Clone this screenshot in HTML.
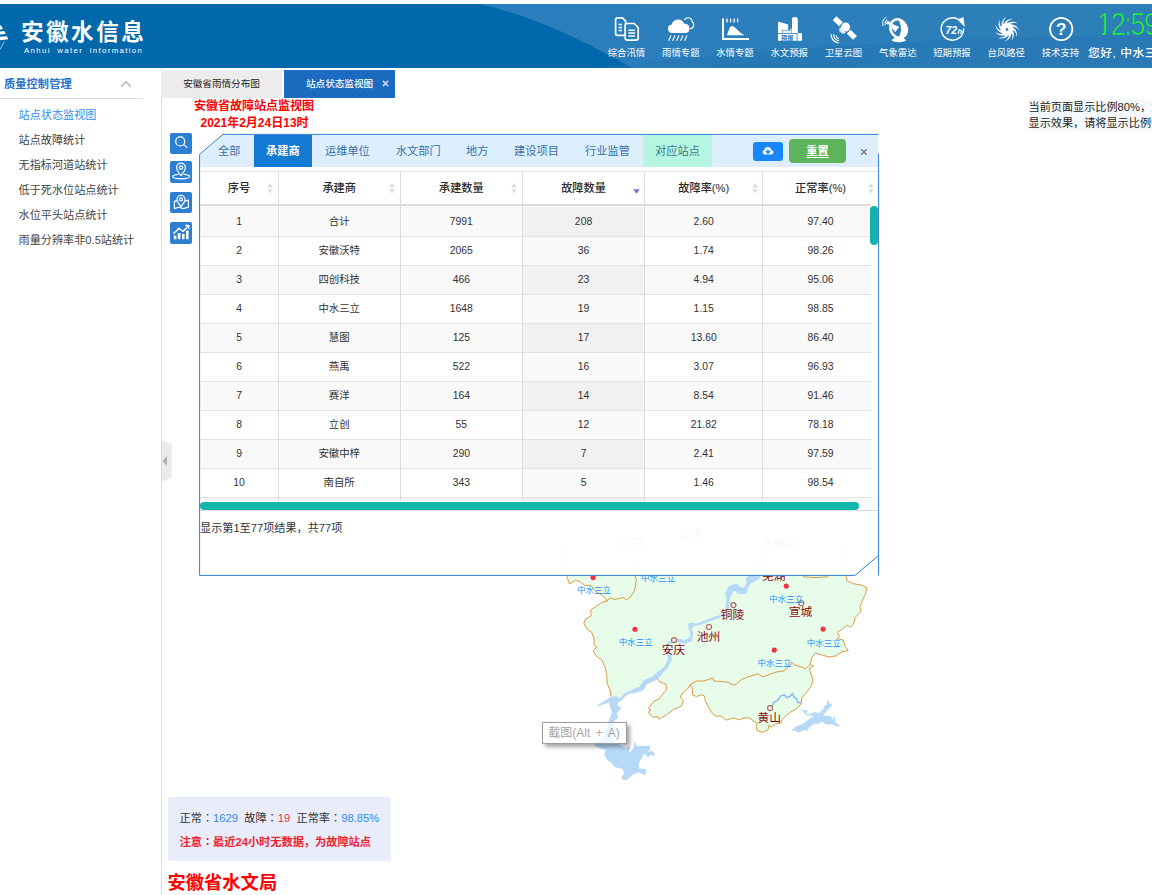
<!DOCTYPE html>
<html lang="zh-CN">
<head>
<meta charset="utf-8">
<title>安徽水信息</title>
<style>
*{box-sizing:border-box;margin:0;padding:0}
html,body{width:1152px;height:895px;overflow:hidden;background:#fff}
body{position:relative;font-family:"Liberation Sans","Noto Sans CJK SC",sans-serif;color:#333;font-size:10.4px}
.abs{position:absolute}
.fw{font-family:"Noto Sans CJK TC","Noto Sans CJK SC",sans-serif}
/* header */
#hdr{left:0;top:4px;width:1152px;height:63.5px;background:#0068ab;overflow:hidden}
#hdr svg.bg{position:absolute;left:0;top:0}
#logo-t{left:21px;top:14.4px;font-size:22.6px;font-weight:bold;color:#fff;letter-spacing:2.45px;line-height:30px;white-space:nowrap}
#logo-s{left:24px;top:42.2px;font-size:7.8px;color:#fff;letter-spacing:1.36px;line-height:10px;white-space:nowrap;word-spacing:3px}
.nav{position:absolute;top:43px;width:56px;text-align:center;color:#fff;font-size:9.4px;line-height:12px;white-space:nowrap}
.nico{position:absolute;top:11px;width:30px;height:30px}
#clock{left:1097.4px;top:2.6px;font-size:30.6px;line-height:34px;color:#1cf23c;white-space:nowrap;-webkit-text-stroke:0.7px #2b7ab5;letter-spacing:-1.6px;transform:scaleX(0.885);transform-origin:0 0}
#hello{left:1088px;top:42px;font-size:11.8px;line-height:14px;color:#fff;white-space:nowrap;letter-spacing:0.5px;font-weight:500}
/* sidebar */
#side{left:0;top:68px;width:162px;height:827px;border-right:1px solid #dcdcdc;background:#fff}
#side .ttl{left:4px;top:9px;font-size:11.2px;font-weight:bold;color:#2a6fcb;line-height:14px;white-space:nowrap;letter-spacing:0.1px}
#side .ln{left:0;top:30px;width:143px;height:1px;background:#ddd}
#side .it{left:18.5px;font-size:11.15px;line-height:14px;color:#444;white-space:nowrap}
#handle{left:161.8px;top:440px;width:10px;height:42px;background:#ebebeb;clip-path:polygon(0 0,100% 10%,100% 90%,0 100%)}
/* tabs */
.tab{top:69.5px;height:28px;line-height:28px;font-size:9.6px;white-space:nowrap;text-align:center}
#tab1{left:161px;width:121px;background:#ececec;color:#222}
#tab2{left:284px;width:111px;background:#1b6cc0;color:#fff}
#rt1,#rt2{color:#f00;font-weight:bold;font-size:12px;line-height:14px;white-space:nowrap}
#note{left:1028.5px;top:98.6px;font-size:11.15px;line-height:16.2px;color:#222;white-space:nowrap;background:#f5f9fd;width:130px}
.tbtn{left:170px;width:22px;height:21px;background:#2d7fd1;border-radius:2px}
/* panel */
#panel{left:199px;top:133.5px;width:680px;height:442.5px}
</style>
</head>
<body>
<!--HEADER-->
<div id="hdr" class="abs">
<svg class="bg" width="1152" height="64" viewBox="0 0 1152 64">
<defs><linearGradient id="hg" x1="0" y1="0" x2="1" y2="0"><stop offset="0" stop-color="#2a7ebd"/><stop offset="1" stop-color="#2e7fb8"/></linearGradient></defs>
<path d="M480 0 C540 14 590 40 632 64 L1152 64 L1152 0 Z" fill="url(#hg)"/>
<path d="M600 64 C700 50 900 34 1152 30 L1152 64 Z" fill="#2474b2" opacity="0.55"/>
</svg>
<svg class="abs" style="left:0;top:-4px" width="14" height="68" viewBox="0 0 14 68"><path d="M0 25.4 L1.2 25.4 L3 29 L0 29.6 Z M0 31.6 L4.2 31 L5.8 34 L0 34.6 Z M0 36.8 L6.8 36.2 L8.4 39.2 L0 40.2 Z" fill="#fff"/><path d="M4.2 41.6 L0 49.4" stroke="#dfeaf5" stroke-width="0.7" fill="none"/></svg>
<div id="logo-t" class="abs">安徽水信息</div>
<div id="logo-s" class="abs">Anhui water information</div>
<!--NAV-S-->
<div class="nav" style="left:598.5px">综合汛情</div>
<div class="nav" style="left:652.8px">雨情专题</div>
<div class="nav" style="left:707.0px">水情专题</div>
<div class="nav" style="left:761.2px">水文预报</div>
<div class="nav" style="left:815.5px">卫星云图</div>
<div class="nav" style="left:869.8px">气象雷达</div>
<div class="nav" style="left:924.0px">短期预报</div>
<div class="nav" style="left:978.2px">台风路径</div>
<div class="nav" style="left:1032.5px">技术支持</div>
<svg class="abs" style="left:0;top:-4px" width="1152" height="68" viewBox="0 0 1152 68" fill="none" stroke="#fff" stroke-linecap="round" stroke-linejoin="round">
<path d="M617.5 17.9 H622.4 L625.6 21.1 V33.2 Q625.6 35.4 623.4 35.4 H617.5 Q615.6 35.4 615.6 33.2 V20 Q615.6 17.9 617.5 17.9 Z" stroke-width="1.7"/>
<path d="M618.6 24.4 H622 M618.6 27.5 H622 M618.6 30.6 H622" stroke-width="1.5" stroke-linecap="butt"/>
<path d="M627.3 23.5 H634.2 L638.2 27.5 V38 Q638.2 40.2 636 40.2 H627.3 Q625.2 40.2 625.2 38 V25.7 Q625.2 23.5 627.3 23.5 Z" stroke-width="1.7" fill="#2b7dbb"/>
<path d="M628.3 30.2 H635 M628.3 33.1 H635 M628.3 36 H635" stroke-width="1.5" stroke-linecap="butt"/>
<path d="M684.5 19.6 Q686 17.6 688.6 17.8 Q692 18.4 692.2 21.8 Q694.2 23 693.6 26 Q692.8 28.6 690 28.8" stroke-width="1.1"/>
<path d="M672.8 33 Q668 33 668 28.8 Q668 25 671.8 24.6 Q672.6 19.6 678 19.4 Q682.6 19.4 684.2 23.8 Q689.4 23.6 689.4 28.4 Q689.4 33 684.8 33 Z" fill="#fff" stroke="none"/>
<path d="M671.0 35.6 L668.6 40.8" stroke-width="1.1" stroke-linecap="butt"/>
<path d="M675.0 35.6 L672.6 40.8" stroke-width="1.1" stroke-linecap="butt"/>
<path d="M679.0 35.6 L676.6 40.8" stroke-width="1.1" stroke-linecap="butt"/>
<path d="M683.0 35.6 L680.6 40.8" stroke-width="1.1" stroke-linecap="butt"/>
<path d="M687.0 35.6 L684.6 40.8" stroke-width="1.1" stroke-linecap="butt"/>
<path d="M723 18.4 V39 H749" stroke-width="2" stroke-linecap="butt" stroke-linejoin="miter"/>
<path d="M727 18.6 V22.4" stroke-width="1.3" stroke-linecap="butt"/>
<path d="M730.6 18.6 V22.4" stroke-width="1.3" stroke-linecap="butt"/>
<path d="M734.2 18.6 V22.4" stroke-width="1.3" stroke-linecap="butt"/>
<path d="M737.6 18.6 V22.4" stroke-width="1.3" stroke-linecap="butt"/>
<path d="M727 35.2 Q729.6 26 731.8 26 Q734 26 738 30.6 Q741 34 744.6 35.2 Z" fill="#fff" stroke="none"/>
<path d="M778 21.6 L788.2 24.6 V30 H782 V33 H778 Z" fill="#fff" stroke="none"/>
<path d="M792 33 V19 Q792 17 794 17 H795.8 Q797.8 17 797.8 19 V33 Z" fill="#fff" stroke="none"/>
<path d="M782.6 30.4 H790.4 V28.6 H791.6 V33 H782.6 Z" fill="#fff" stroke="none" opacity="0.9"/>
<rect x="778" y="33.8" width="18.6" height="7" fill="#fff" stroke="none"/>
<rect x="797.4" y="33.2" width="4.6" height="7.6" fill="#fff" stroke="none"/>
<text x="787.3" y="39.6" font-size="6.2" font-weight="bold" fill="#2b7dbb" stroke="none" text-anchor="middle" font-family="Liberation Sans, Noto Sans CJK SC, sans-serif">预报</text>
<g transform="rotate(44 844.6 27.9)" stroke="none" fill="#fff"><rect x="830.6" y="25.1" width="8.8" height="5.4"/><rect x="850.2" y="25.1" width="8.8" height="5.4"/><circle cx="844.8" cy="26.6" r="4.5"/><path d="M840.4 30.4 H849.2 L847 33.8 H842.6 Z" opacity="0.85"/></g>
<path d="M836 35.6 Q836.4 38 838.6 38.6" stroke-width="1.1"/><path d="M833.6 34.6 Q834 39.6 838.6 40.8" stroke-width="1.1"/><path d="M831 34.4 Q831.6 41.6 838.4 43" stroke-width="1.1"/>
<g transform="rotate(-25 898.6 28.6)"><ellipse cx="898.6" cy="28.6" rx="8" ry="9.6" stroke-width="2.6"/></g>
<path d="M899 20 Q908 22 906.6 31 Q905 38 897 38.6 Q904 33 899 20 Z" fill="#fff" stroke="none"/>
<path d="M888 22.6 L898.6 27 L895.4 31.4 Z" fill="#fff" stroke="#fff" stroke-width="0.8"/><circle cx="888" cy="22.8" r="1.8" fill="#fff" stroke="none"/>
<path d="M886.8 19.4 Q884.4 21.4 885.2 24.8" stroke-width="1"/><path d="M885.6 17.2 Q881.6 20.4 883 25.8" stroke-width="1"/>
<ellipse cx="898.8" cy="40.2" rx="7" ry="2" fill="#fff" stroke="none"/><path d="M894 38 H903.6 L905 40 H892.6 Z" fill="#fff" stroke="none"/>
<path d="M960.6 21.4 A11.2 11.2 0 1 0 963.6 29" stroke-width="1.5"/>
<path d="M957.6 19.6 L963.4 17 L964.8 27 Z" fill="#fff" stroke="none"/>
<text x="945.6" y="34.4" font-size="10.4" font-weight="bold" font-style="italic" fill="#fff" stroke="none" font-family="Liberation Sans, sans-serif">72<tspan font-size="7.4" dx="0.4">h</tspan></text>
<path d="M1011.50 29.40 L1012.43 30.26 L1013.19 31.40 L1013.69 32.79 L1013.89 34.37 L1013.75 36.09 L1013.21 37.86 L1012.28 39.62 L1010.94 41.26 L1010.94 41.26 L1011.63 39.93 L1012.11 38.57 L1012.38 37.23 L1012.45 35.92 L1012.33 34.68 L1012.02 33.52 L1011.56 32.48 L1010.95 31.56 Z M1010.79 31.83 L1011.11 33.06 L1011.12 34.43 L1010.80 35.87 L1010.11 37.31 L1009.06 38.67 L1007.65 39.88 L1005.92 40.85 L1003.90 41.51 L1003.90 41.51 L1005.21 40.76 L1006.34 39.88 L1007.29 38.90 L1008.06 37.83 L1008.62 36.72 L1009.00 35.59 L1009.17 34.45 L1009.16 33.35 Z M1008.87 33.49 L1008.48 34.70 L1007.75 35.86 L1006.70 36.89 L1005.34 37.74 L1003.72 38.31 L1001.88 38.57 L999.90 38.45 L997.85 37.91 L997.85 37.91 L999.35 37.99 L1000.78 37.86 L1002.11 37.55 L1003.33 37.07 L1004.41 36.44 L1005.33 35.68 L1006.09 34.82 L1006.68 33.89 Z M1006.36 33.85 L1005.38 34.66 L1004.14 35.24 L1002.69 35.54 L1001.10 35.52 L999.42 35.12 L997.74 34.35 L996.14 33.17 L994.70 31.61 L994.70 31.61 L995.92 32.49 L997.19 33.15 L998.48 33.61 L999.77 33.86 L1001.01 33.92 L1002.20 33.79 L1003.31 33.47 L1004.30 33.00 Z M1004.05 32.80 L1002.80 32.95 L1001.44 32.77 L1000.06 32.24 L998.73 31.35 L997.53 30.12 L996.53 28.55 L995.82 26.70 L995.45 24.61 L995.45 24.61 L996.01 26.01 L996.72 27.26 L997.56 28.34 L998.50 29.25 L999.52 29.97 L1000.59 30.50 L1001.69 30.83 L1002.78 30.97 Z M1002.68 30.67 L1001.55 30.11 L1000.50 29.23 L999.63 28.03 L998.98 26.57 L998.64 24.88 L998.65 23.03 L999.06 21.09 L999.88 19.13 L999.88 19.13 L999.59 20.61 L999.51 22.04 L999.63 23.40 L999.93 24.68 L1000.40 25.83 L1001.02 26.86 L1001.76 27.73 L1002.60 28.44 Z M1002.68 28.13 L1002.03 27.05 L1001.63 25.74 L1001.53 24.26 L1001.79 22.69 L1002.41 21.08 L1003.42 19.53 L1004.81 18.11 L1006.56 16.91 L1006.56 16.91 L1005.52 18.00 L1004.68 19.16 L1004.04 20.37 L1003.61 21.61 L1003.38 22.83 L1003.34 24.03 L1003.49 25.16 L1003.82 26.22 Z M1004.05 26.00 L1004.09 24.73 L1004.46 23.42 L1005.18 22.12 L1006.24 20.93 L1007.64 19.92 L1009.33 19.16 L1011.26 18.72 L1013.38 18.65 L1013.38 18.65 L1011.92 19.01 L1010.59 19.53 L1009.39 20.21 L1008.36 21.01 L1007.50 21.92 L1006.83 22.90 L1006.34 23.94 L1006.04 25.00 Z M1006.36 24.95 L1007.07 23.90 L1008.10 22.99 L1009.40 22.29 L1010.94 21.87 L1012.66 21.77 L1014.49 22.04 L1016.36 22.72 L1018.18 23.81 L1018.18 23.81 L1016.76 23.32 L1015.35 23.04 L1013.98 22.96 L1012.68 23.08 L1011.47 23.38 L1010.37 23.84 L1009.40 24.45 L1008.57 25.18 Z M1008.87 25.31 L1010.04 24.81 L1011.39 24.60 L1012.86 24.72 L1014.39 25.20 L1015.89 26.04 L1017.28 27.26 L1018.49 28.84 L1019.43 30.74 L1019.43 30.74 L1018.50 29.56 L1017.47 28.56 L1016.36 27.76 L1015.20 27.15 L1014.02 26.75 L1012.84 26.54 L1011.69 26.53 L1010.60 26.70 Z M1010.79 26.97 L1012.03 27.18 L1013.28 27.74 L1014.46 28.63 L1015.49 29.86 L1016.29 31.38 L1016.80 33.16 L1016.97 35.14 L1016.73 37.25 L1016.73 37.25 L1016.59 35.75 L1016.26 34.35 L1015.76 33.08 L1015.11 31.94 L1014.34 30.96 L1013.46 30.15 L1012.50 29.52 L1011.49 29.08 Z" fill="#fff" stroke="none"/>
<circle cx="1007" cy="29.4" r="6.4" fill="#fff" stroke="none"/><circle cx="1007" cy="29.4" r="1.3" fill="#2f7fc0" stroke="none"/>
<circle cx="1061.2" cy="29" r="11.2" stroke-width="1.7"/>
<text x="1061.2" y="35" font-size="17" font-weight="bold" fill="#fff" stroke="none" text-anchor="middle" font-family="Liberation Sans, sans-serif">?</text>
</svg>
<!--NAV-E-->
<div id="clock" class="abs"><span style="display:inline-block;clip-path:polygon(0 0,100% 0,100% 26.2px,10.3px 26.2px,10.3px 100%,6.1px 100%,6.1px 26.2px,0 26.2px)">1</span>2:59</div>
<div id="hello" class="abs">您好, 中水三立</div>
</div>
<!--SIDEBAR-->
<div id="side" class="abs">
<div class="ttl abs">质量控制管理</div>
<svg class="abs" style="left:120px;top:12px" width="12" height="8" viewBox="0 0 12 8"><path d="M1.2 6.6 L6 1.8 L10.8 6.6" fill="none" stroke="#b5b5b5" stroke-width="1.5"/></svg>
<div class="ln abs"></div>
<div class="it abs" style="top:39.7px;color:#2f8bef">站点状态监视图</div>
<div class="it abs" style="top:64.7px">站点故障统计</div>
<div class="it abs" style="top:89.7px">无指标河道站统计</div>
<div class="it abs" style="top:114.7px">低于死水位站点统计</div>
<div class="it abs" style="top:139.7px">水位平头站点统计</div>
<div class="it abs" style="top:164.7px">雨量分辨率非0.5站统计</div>
</div>
<div id="handle" class="abs"></div>
<svg class="abs" style="left:161.8px;top:455.3px" width="6" height="12" viewBox="0 0 6 12"><path d="M0.5 6 L5 1 L5 11 Z" fill="#b0b0b0"/></svg>
<!--TABS-->
<div id="tab1" class="tab abs">安徽省雨情分布图</div>
<div id="tab2" class="tab abs"><span style="position:absolute;left:22px;top:0;font-weight:500">站点状态监视图</span><svg style="position:absolute;left:97.6px;top:10.6px" width="7" height="7" viewBox="0 0 7 7"><path d="M0.9 0.9 L6.1 6.1 M6.1 0.9 L0.9 6.1" stroke="#c3d2ea" stroke-width="1.7"/></svg></div>
<div id="rt1" class="abs" style="left:194px;top:99px">安徽省故障站点监视图</div>
<div id="rt2" class="abs" style="left:200.5px;top:116.2px">2021年2月24日13时</div>
<div id="note" class="abs">当前页面显示比例80%，为了达到最佳<br>显示效果，请将显示比例调整为100%</div>
<!--MAP-S-->
<svg class="abs" style="left:0;top:0" width="1152" height="895" viewBox="0 0 1152 895" fill="none" stroke-linejoin="round" stroke-linecap="round">
<path d="M566.0 545.0 L566.9 576.4 L569.4 583.9 L575.6 580.1 L580.6 582.0 L585.0 585.8 L590.6 585.1 L596.2 592.0 L602.5 595.1 L606.2 598.9 L606.9 601.4 L602.5 602.0 L596.2 606.4 L590.6 610.1 L591.2 615.8 L585.6 618.9 L583.8 623.2 L586.9 628.9 L591.9 632.6 L594.4 640.1 L593.8 644.5 L596.9 647.0 L593.1 650.8 L596.2 655.8 L601.9 660.1 L605.0 667.0 L606.9 674.5 L607.1 683.5 L610.2 689.8 L610.9 696.0 L617.0 698.5 L620.2 699.0 L626.5 693.0 L634.0 690.5 L641.5 688.0 L645.2 682.0 L654.0 678.0 L657.1 678.5 L660.2 682.2 L665.9 684.1 L666.5 689.8 L662.1 694.8 L659.0 699.1 L654.0 701.0 L650.2 706.0 L648.4 708.5 L651.0 710.0 L648.4 712.2 L652.8 717.2 L657.8 716.6 L659.0 719.1 L666.5 714.8 L674.0 709.1 L681.5 706.0 L683.4 700.4 L680.2 697.2 L683.4 692.2 L687.8 688.5 L690.2 684.8 L692.8 689.8 L692.1 694.8 L696.5 696.6 L701.5 694.8 L704.6 696.0 L705.2 701.0 L707.8 706.0 L711.5 712.2 L715.2 716.0 L721.5 716.0 L725.2 719.8 L728.0 719.8 L733.0 717.9 L739.2 719.8 L744.2 717.9 L749.2 717.9 L753.0 720.4 L757.4 723.5 L756.1 726.0 L756.8 730.4 L761.8 732.2 L768.0 729.8 L769.2 724.8 L770.5 727.2 L775.5 724.1 L781.1 722.9 L781.8 719.8 L785.5 716.0 L790.5 712.2 L796.8 708.5 L801.1 704.1 L801.8 697.9 L805.5 693.5 L810.5 687.2 L813.0 681.0 L811.8 676.0 L809.0 668.9 L813.5 666.0 L810.2 664.5 L811.5 658.2 L815.2 653.2 L820.2 654.5 L829.0 657.0 L836.5 655.8 L841.5 652.0 L848.3 650.5 L845.0 646.2 L843.1 640.0 L837.5 638.8 L839.4 636.2 L837.5 632.5 L842.5 628.8 L847.5 625.0 L850.0 627.5 L853.8 623.8 L855.0 617.5 L861.2 611.2 L860.0 607.5 L862.5 600.0 L865.6 593.8 L866.9 587.5 L861.2 585.0 L853.8 583.8 L846.9 580.6 L846.2 576.2 L846.0 545.0 Z" fill="#e7fdea"/>
<path d="M762.0 560.0 L756.5 575.8 L750.2 579.5 L747.1 585.8 L744.0 590.8 L739.0 590.8 L735.9 587.0 L730.9 588.9 L728.4 594.5 L727.8 602.0 L727.1 608.2 L724.0 614.5 L716.5 617.6 L709.0 620.1 L704.0 622.0 L697.5 624.5 L691.2 624.5 L690.0 628.2 L691.9 633.2 L690.6 639.5 L685.0 642.0 L678.8 640.8 L674.0 640.1 L668.8 643.2 L667.5 647.0 L668.8 654.5 L670.0 659.5 L666.2 667.0 L660.0 673.2 L654.0 678.5 L645.2 682.2 L641.5 688.5 L634.0 691.0 L626.5 693.5 L620.2 699.8" stroke="#b6d9f8" stroke-width="2.6"/>
<path d="M762.0 560.0 L756.5 575.8 L750.2 579.5" stroke="#b6d9f8" stroke-width="8"/>
<path d="M750.2 579.5 L747.1 585.8 L744.0 590.8" stroke="#b6d9f8" stroke-width="4"/>
<path d="M744.0 590.8 L739.0 590.8 L735.9 587.0 L730.9 588.9 L728.4 594.5" stroke="#b6d9f8" stroke-width="6.5"/>
<path d="M728.4 594.5 L727.8 602.0 L727.1 608.2" stroke="#b6d9f8" stroke-width="3.6"/>
<circle cx="691" cy="625.6" r="2.8" fill="#b6d9f8"/>
<path d="M690.6 639.5 L685.0 642.0 L678.8 640.8 L674.0 640.1" stroke="#b6d9f8" stroke-width="4"/>
<path d="M668.8 654.5 L670.0 659.5 L666.2 667.0 L660.0 673.2" stroke="#b6d9f8" stroke-width="3.6"/>
<path d="M660.0 673.2 L654.0 678.5 L645.2 682.2 L641.5 688.5 L634.0 691.0" stroke="#b6d9f8" stroke-width="5"/>
<path d="M597.1 705.4 L606.5 699.8 L611.5 696.6 L617.8 696.6 L620.2 700.4 L617.8 702.9 L617.1 704.8 L620.9 707.9 L619.6 710.4 L617.1 712.2 L617.8 718.5 L614.5 720.0 L614.0 724.8 L612.8 736.0 L614.6 742.2 L620.2 744.8 L625.2 747.9 L630.2 746.0 L629.0 753.5 L633.4 747.9 L634.6 741.0 L636.5 746.0 L640.2 746.0 L650.2 745.4 L650.2 748.5 L647.8 752.2 L651.5 750.4 L654.6 753.5 L654.0 756.0 L650.2 754.8 L648.4 757.2 L644.0 753.5 L641.5 758.5 L639.0 763.5 L639.0 768.5 L646.5 769.1 L645.2 775.4 L639.0 772.2 L632.8 774.8 L625.9 780.4 L620.9 778.5 L624.0 773.5 L622.8 769.1 L615.2 767.2 L612.1 763.5 L607.1 759.8 L604.0 754.8 L605.9 749.8 L599.6 748.5 L595.2 746.0 L593.4 742.2 L600.2 741.0 L604.0 736.0 L607.8 724.8 L609.0 719.8 L612.1 712.2 L609.6 705.4 L609.0 702.2 L597.6 706.4 Z" fill="#b6d9f8"/>
<path d="M799.9 705.4 L803.0 709.8 L808.0 710.4 L806.1 713.5 L810.5 714.1 L815.5 711.6 L818.0 713.5 L823.0 709.8 L824.2 706.0 L826.8 704.8 L828.0 698.5 L829.2 702.9 L832.4 704.8 L829.2 708.5 L825.5 712.2 L823.0 716.6 L826.8 715.4 L830.5 716.6 L833.6 719.8 L834.2 714.1 L835.5 722.2 L840.5 726.6 L835.5 726.0 L831.8 724.1 L826.8 724.8 L821.8 721.6 L818.0 724.1 L815.5 723.5 L810.5 726.0 L806.8 731.0 L804.2 729.8 L798.0 732.9 L796.1 730.4 L791.1 731.0 L795.5 726.6 L803.0 724.1 L808.0 719.8 L814.2 716.0 L809.2 715.4 L805.5 714.8 L801.8 709.8 Z" fill="#b6d9f8"/>
<path d="M771.8 706.0 L774.2 702.2 L778.0 699.8 L780.5 696.0 L784.2 694.8 L786.8 697.9 L790.5 696.0 L792.4 693.5 L794.2 697.2 L796.8 699.1 L797.4 702.2 L800.5 702.9" stroke="#74b4f4" stroke-width="1.3"/>
<path d="M566.0 545.0 L566.9 576.4 L569.4 583.9 L575.6 580.1 L580.6 582.0 L585.0 585.8 L590.6 585.1 L596.2 592.0 L602.5 595.1 L606.2 598.9 L606.9 601.4 L602.5 602.0 L596.2 606.4 L590.6 610.1 L591.2 615.8 L585.6 618.9 L583.8 623.2 L586.9 628.9 L591.9 632.6 L594.4 640.1 L593.8 644.5 L596.9 647.0 L593.1 650.8 L596.2 655.8 L601.9 660.1 L605.0 667.0 L606.9 674.5 L607.1 683.5 L610.2 689.8 L610.9 696.0" stroke="#db9a45" stroke-width="1"/>
<path d="M657.1 678.5 L660.2 682.2 L665.9 684.1 L666.5 689.8 L662.1 694.8 L659.0 699.1 L654.0 701.0 L650.2 706.0 L648.4 708.5 L651.0 710.0 L648.4 712.2 L652.8 717.2 L657.8 716.6 L659.0 719.1 L666.5 714.8 L674.0 709.1 L681.5 706.0 L683.4 700.4 L680.2 697.2 L683.4 692.2 L687.8 688.5 L690.2 684.8 L692.8 689.8 L692.1 694.8 L696.5 696.6 L701.5 694.8 L704.6 696.0 L705.2 701.0 L707.8 706.0 L711.5 712.2 L715.2 716.0 L721.5 716.0 L725.2 719.8 L728.0 719.8 L733.0 717.9 L739.2 719.8 L744.2 717.9 L749.2 717.9 L753.0 720.4 L757.4 723.5 L756.1 726.0 L756.8 730.4 L761.8 732.2 L768.0 729.8 L769.2 724.8 L770.5 727.2 L775.5 724.1 L781.1 722.9 L781.8 719.8 L785.5 716.0 L790.5 712.2 L796.8 708.5 L801.1 704.1 L801.8 697.9 L805.5 693.5 L810.5 687.2 L813.0 681.0 L811.8 676.0 L809.0 668.9 L813.5 666.0 L810.2 664.5 L811.5 658.2 L815.2 653.2 L820.2 654.5 L829.0 657.0 L836.5 655.8 L841.5 652.0 L848.3 650.5 L845.0 646.2 L843.1 640.0 L837.5 638.8 L839.4 636.2 L837.5 632.5 L842.5 628.8 L847.5 625.0 L850.0 627.5 L853.8 623.8 L855.0 617.5 L861.2 611.2 L860.0 607.5 L862.5 600.0 L865.6 593.8 L866.9 587.5 L861.2 585.0 L853.8 583.8 L846.9 580.6 L846.2 576.2 L846.0 545.0" stroke="#db9a45" stroke-width="1"/>
<path d="M606.9 601.4 L610.0 597.6 L615.0 599.5 L620.0 598.2 L623.8 597.6 L626.2 600.1 L630.0 597.6 L633.8 592.0 L635.6 585.8 L636.2 579.5 L635.0 575.8 L634.0 560.0" stroke="#db9a45" stroke-width="1"/>
<path d="M690.2 684.8 L696.5 681.0 L704.0 681.0 L712.8 678.0 L714.0 681.0 L721.5 681.5 L728.0 682.2 L733.0 685.0 L737.0 683.5 L741.5 679.5 L747.8 677.0 L757.8 673.9 L762.8 677.0 L769.0 674.5 L776.5 672.0 L784.0 670.8 L790.2 665.1 L791.5 662.0 L795.2 665.1 L801.5 667.0 L805.2 668.9 L810.2 664.5" stroke="#db9a45" stroke-width="1"/>
<path d="M798.0 566.0 L803.8 576.9 L815.0 577.6 L827.5 576.9 L836.0 568.0" stroke="#db9a45" stroke-width="1"/>
<circle cx="593.1" cy="577.6" r="2.6" fill="#ee3048"/>
<circle cx="635" cy="629.25" r="2.6" fill="#ee3048"/>
<circle cx="786.25" cy="586.1" r="2.6" fill="#ee3048"/>
<circle cx="823.1" cy="629.1" r="2.6" fill="#ee3048"/>
<circle cx="774.25" cy="650.1" r="2.6" fill="#ee3048"/>
<circle cx="674" cy="640.1" r="2.5" fill="#fff3ee" stroke="#a8685a" stroke-width="1.2"/>
<circle cx="709" cy="627" r="2.5" fill="#fff3ee" stroke="#a8685a" stroke-width="1.2"/>
<circle cx="733.4" cy="605.1" r="2.5" fill="#fff3ee" stroke="#a8685a" stroke-width="1.2"/>
<circle cx="801.25" cy="603.25" r="2.5" fill="#fff3ee" stroke="#a8685a" stroke-width="1.2"/>
<circle cx="770.1" cy="708.1" r="2.5" fill="#fff3ee" stroke="#a8685a" stroke-width="1.2"/>
<text x="593.9" y="593" font-size="8.5" fill="#1a8cff" text-anchor="middle" font-family="Liberation Sans, Noto Sans CJK SC, sans-serif">中水三立</text>
<text x="658" y="581.4" font-size="8.5" fill="#1a8cff" text-anchor="middle" font-family="Liberation Sans, Noto Sans CJK SC, sans-serif">中水三立</text>
<text x="635.75" y="645.4" font-size="8.5" fill="#1a8cff" text-anchor="middle" font-family="Liberation Sans, Noto Sans CJK SC, sans-serif">中水三立</text>
<text x="786.3" y="602.2" font-size="8.5" fill="#1a8cff" text-anchor="middle" font-family="Liberation Sans, Noto Sans CJK SC, sans-serif">中水三立</text>
<text x="823.8" y="646" font-size="8.5" fill="#1a8cff" text-anchor="middle" font-family="Liberation Sans, Noto Sans CJK SC, sans-serif">中水三立</text>
<text x="774.5" y="666" font-size="8.5" fill="#1a8cff" text-anchor="middle" font-family="Liberation Sans, Noto Sans CJK SC, sans-serif">中水三立</text>
<text x="673.5" y="654" font-size="11.8" fill="#8a0710" text-anchor="middle" font-family="Liberation Sans, Noto Sans CJK SC, sans-serif">安庆</text>
<text x="708.6" y="641" font-size="11.8" fill="#8a0710" text-anchor="middle" font-family="Liberation Sans, Noto Sans CJK SC, sans-serif">池州</text>
<text x="732.6" y="618.6" font-size="11.8" fill="#8a0710" text-anchor="middle" font-family="Liberation Sans, Noto Sans CJK SC, sans-serif">铜陵</text>
<text x="800.6" y="616" font-size="11.8" fill="#8a0710" text-anchor="middle" font-family="Liberation Sans, Noto Sans CJK SC, sans-serif">宣城</text>
<text x="769.3" y="721.8" font-size="11.8" fill="#8a0710" text-anchor="middle" font-family="Liberation Sans, Noto Sans CJK SC, sans-serif">黄山</text>
<text x="773.7" y="580" font-size="11.8" fill="#8a0710" text-anchor="middle" font-family="Liberation Sans, Noto Sans CJK SC, sans-serif">芜湖</text>
<text x="692" y="538" font-size="11.8" fill="#8a0710" text-anchor="middle" font-family="Liberation Sans, Noto Sans CJK SC, sans-serif">合肥</text>
<text x="631.5" y="548" font-size="11.8" fill="#8a0710" text-anchor="middle" font-family="Liberation Sans, Noto Sans CJK SC, sans-serif">六安</text>
<text x="779" y="548" font-size="11.8" fill="#8a0710" text-anchor="middle" font-family="Liberation Sans, Noto Sans CJK SC, sans-serif">马鞍山</text>
</svg>
<!--MAP-E-->
<!--TOOLS-S-->
<div class="tbtn abs" style="top:133.1px;height:20.8px"></div>
<div class="tbtn abs" style="top:161px;height:21.8px"></div>
<div class="tbtn abs" style="top:192px;height:20.8px"></div>
<div class="tbtn abs" style="top:222.2px;height:21.6px"></div>
<svg class="abs" style="left:0;top:0" width="260" height="260" viewBox="0 0 260 260" fill="none" stroke="#fff" stroke-width="1.2" stroke-linecap="round" stroke-linejoin="round">
<circle cx="180.2" cy="141.4" r="4.5"/><path d="M183.6 144.6 L187 147.4"/>
<path d="M181 175.6 Q176.6 170.6 176.6 167.6 A4.4 4.4 0 0 1 185.4 167.6 Q185.4 170.6 181 175.6 Z"/><circle cx="181" cy="167.6" r="1.7"/>
<path d="M178.2 174.4 Q172.8 175 172.8 176.6 Q172.8 178.8 181.2 178.8 Q189.6 178.8 189.6 176.6 Q189.6 175 184 174.4"/>
<path d="M181 206.4 Q177 202 177 199.4 A4 4 0 0 1 185 199.4 Q185 202 181 206.4 Z"/><circle cx="181" cy="199.4" r="1.5"/>
<path d="M176.8 200.6 L174.4 201.4 V208.6 L178.6 207.2 L183.4 208.6 L188.4 207.2 V200.2 L185.4 201"/>
<g stroke="none" fill="#fff"><rect x="173.8" y="235.6" width="2.6" height="3.6"/><rect x="177.8" y="233" width="2.6" height="6.2"/><rect x="182" y="234" width="2.6" height="5.2"/><rect x="186" y="230.6" width="2.6" height="8.6"/></g>
<path d="M173.6 233.4 L179 228.2 L183 231.4 L188.4 225.8" stroke-width="1.4"/><path d="M185.6 225.4 H188.8 V228.6" stroke-width="1.4"/>
</svg>
<!--TOOLS-E-->
<!--PANEL-S-->
<style>

#pn{position:absolute;left:0;top:0;width:1152px;height:895px;pointer-events:none}
#pbg{position:absolute;left:199.5px;top:134px;width:679.5px;height:441.5px;background:rgba(255,255,255,0.965);clip-path:polygon(23.5px 0,100% 0,100% 421.5px,656px 100%,0 100%,0 20.5px)}
#strip{position:absolute;left:200px;top:134.5px;width:678.4px;height:32.5px;background:linear-gradient(#ddeffd 0,#ddeffd 88%,#e3ecfb 100%);clip-path:polygon(23.4px 0,100% 0,100% 100%,0 100%,0 20px)}
.pt{position:absolute;top:134.5px;height:32.5px;line-height:32.5px;font-size:11.2px;color:#3870ac;text-align:center;white-space:nowrap}
.th{position:absolute;top:172px;height:32.5px;line-height:32.5px;font-size:11.2px;font-weight:500;color:#2a2a2a;text-align:center;white-space:nowrap;background:#fff}
.td{position:absolute;height:28px;line-height:28px;font-size:10.4px;color:#333;text-align:center;white-space:nowrap}
.vl{position:absolute;width:1px;background:#ddd}
.hl{position:absolute;height:1px;background:#e3e3e3;left:200px;width:670.5px}

</style>
<div id="pn">
<div id="pbg"></div>
<div id="strip"></div>
<div class="pt" style="left:204.5px;width:49.4px;">全部</div>
<div class="pt" style="left:253.9px;width:58.0px;background:#127ad3;color:#fff;font-weight:bold;">承建商</div>
<div class="pt" style="left:311.9px;width:71.1px;">运维单位</div>
<div class="pt" style="left:383px;width:70.5px;">水文部门</div>
<div class="pt" style="left:453.5px;width:47.5px;">地方</div>
<div class="pt" style="left:501px;width:71.0px;">建设项目</div>
<div class="pt" style="left:572px;width:71.0px;">行业监管</div>
<div class="pt" style="left:643px;width:69.0px;background:#b4f6e2;color:#3a7a86;">对应站点</div>
<div class="abs" style="left:753px;top:142px;width:30px;height:19px;background:#1887fa;border-radius:3px"></div>
<svg class="abs" style="left:762px;top:146px" width="12" height="10" viewBox="0 0 12 10"><path d="M3 8.4 Q0.6 8.4 0.6 6.2 Q0.6 4.4 2.4 4 Q2.6 1 5.8 1 Q8.6 1 9.2 3.8 Q11.4 4 11.4 6.2 Q11.4 8.4 9 8.4 Z" fill="#fff"/><path d="M6 3.6 V5.6 M4.2 5.4 L6 7.4 L7.8 5.4 Z" stroke="#1887fa" stroke-width="1.1" fill="#1887fa"/></svg>
<div class="abs" style="left:789px;top:139px;width:57px;height:24px;background:#5cb45c;border-radius:4px;color:#fff;font-weight:bold;font-size:11.2px;line-height:24px;text-align:center;text-decoration:underline;text-underline-offset:1.5px">重置</div>
<svg class="abs" style="left:860px;top:148px" width="8" height="8" viewBox="0 0 8 8"><path d="M1.2 1.2 L6.6 6.6 M6.6 1.2 L1.2 6.6" stroke="#8c7c88" stroke-width="1.6"/></svg>
<div class="hl" style="top:171.3px;width:678px;background:#e6e6e6"></div>
<div class="th" style="left:200px;width:78.1px">序号</div>
<svg class="abs" style="left:266.9px;top:182.6px" width="6" height="11" viewBox="0 0 6 11"><path d="M3 0.3 L5.8 4.6 H0.2 Z M0.2 6.2 H5.8 L3 10.6 Z" fill="#dcdcdc"/></svg>
<div class="th" style="left:278.1px;width:122.2px">承建商</div>
<svg class="abs" style="left:389.1px;top:182.6px" width="6" height="11" viewBox="0 0 6 11"><path d="M3 0.3 L5.8 4.6 H0.2 Z M0.2 6.2 H5.8 L3 10.6 Z" fill="#dcdcdc"/></svg>
<div class="th" style="left:400.3px;width:122.1px">承建数量</div>
<svg class="abs" style="left:511.2px;top:182.6px" width="6" height="11" viewBox="0 0 6 11"><path d="M3 0.3 L5.8 4.6 H0.2 Z M0.2 6.2 H5.8 L3 10.6 Z" fill="#dcdcdc"/></svg>
<div class="th" style="left:522.4px;width:122.3px">故障数量</div>
<svg class="abs" style="left:633.1px;top:189px" width="7" height="5" viewBox="0 0 7 5"><path d="M0.2 0.2 H6.8 L3.5 4.8 Z" fill="#7a6be0"/></svg>
<div class="th" style="left:644.7px;width:118.1px">故障率(%)</div>
<svg class="abs" style="left:751.6px;top:182.6px" width="6" height="11" viewBox="0 0 6 11"><path d="M3 0.3 L5.8 4.6 H0.2 Z M0.2 6.2 H5.8 L3 10.6 Z" fill="#dcdcdc"/></svg>
<div class="th" style="left:762.8px;width:115.6px">正常率(%)</div>
<svg class="abs" style="left:868.4px;top:182.6px" width="6" height="11" viewBox="0 0 6 11"><path d="M3 0.3 L5.8 4.6 H0.2 Z M0.2 6.2 H5.8 L3 10.6 Z" fill="#dcdcdc"/></svg>
<div class="abs" style="left:200px;top:204.3px;width:670.5px;height:2.2px;background:#dcdcdc"></div>
<div class="td" style="left:200px;top:206.5px;width:78.1px;height:29.8px;line-height:29.8px;background:#f9f9f9">1</div>
<div class="td" style="left:278.1px;top:206.5px;width:122.2px;height:29.8px;line-height:29.8px;background:#f9f9f9">合计</div>
<div class="td" style="left:400.3px;top:206.5px;width:122.1px;height:29.8px;line-height:29.8px;background:#f9f9f9">7991</div>
<div class="td" style="left:522.4px;top:206.5px;width:122.3px;height:29.8px;line-height:29.8px;background:#f1f1f1">208</div>
<div class="td" style="left:644.7px;top:206.5px;width:118.1px;height:29.8px;line-height:29.8px;background:#f9f9f9">2.60</div>
<div class="td" style="left:762.8px;top:206.5px;width:115.6px;height:29.8px;line-height:29.8px;background:#f9f9f9">97.40</div>
<div class="td" style="left:200px;top:236.3px;width:78.1px;height:29.0px;line-height:29.0px;background:#ffffff">2</div>
<div class="td" style="left:278.1px;top:236.3px;width:122.2px;height:29.0px;line-height:29.0px;background:#ffffff">安徽沃特</div>
<div class="td" style="left:400.3px;top:236.3px;width:122.1px;height:29.0px;line-height:29.0px;background:#ffffff">2065</div>
<div class="td" style="left:522.4px;top:236.3px;width:122.3px;height:29.0px;line-height:29.0px;background:#fafafa">36</div>
<div class="td" style="left:644.7px;top:236.3px;width:118.1px;height:29.0px;line-height:29.0px;background:#ffffff">1.74</div>
<div class="td" style="left:762.8px;top:236.3px;width:115.6px;height:29.0px;line-height:29.0px;background:#ffffff">98.26</div>
<div class="td" style="left:200px;top:265.3px;width:78.1px;height:29.0px;line-height:29.0px;background:#f9f9f9">3</div>
<div class="td" style="left:278.1px;top:265.3px;width:122.2px;height:29.0px;line-height:29.0px;background:#f9f9f9">四创科技</div>
<div class="td" style="left:400.3px;top:265.3px;width:122.1px;height:29.0px;line-height:29.0px;background:#f9f9f9">466</div>
<div class="td" style="left:522.4px;top:265.3px;width:122.3px;height:29.0px;line-height:29.0px;background:#f1f1f1">23</div>
<div class="td" style="left:644.7px;top:265.3px;width:118.1px;height:29.0px;line-height:29.0px;background:#f9f9f9">4.94</div>
<div class="td" style="left:762.8px;top:265.3px;width:115.6px;height:29.0px;line-height:29.0px;background:#f9f9f9">95.06</div>
<div class="td" style="left:200px;top:294.3px;width:78.1px;height:29.0px;line-height:29.0px;background:#ffffff">4</div>
<div class="td" style="left:278.1px;top:294.3px;width:122.2px;height:29.0px;line-height:29.0px;background:#ffffff">中水三立</div>
<div class="td" style="left:400.3px;top:294.3px;width:122.1px;height:29.0px;line-height:29.0px;background:#ffffff">1648</div>
<div class="td" style="left:522.4px;top:294.3px;width:122.3px;height:29.0px;line-height:29.0px;background:#fafafa">19</div>
<div class="td" style="left:644.7px;top:294.3px;width:118.1px;height:29.0px;line-height:29.0px;background:#ffffff">1.15</div>
<div class="td" style="left:762.8px;top:294.3px;width:115.6px;height:29.0px;line-height:29.0px;background:#ffffff">98.85</div>
<div class="td" style="left:200px;top:323.3px;width:78.1px;height:29.0px;line-height:29.0px;background:#f9f9f9">5</div>
<div class="td" style="left:278.1px;top:323.3px;width:122.2px;height:29.0px;line-height:29.0px;background:#f9f9f9">慧图</div>
<div class="td" style="left:400.3px;top:323.3px;width:122.1px;height:29.0px;line-height:29.0px;background:#f9f9f9">125</div>
<div class="td" style="left:522.4px;top:323.3px;width:122.3px;height:29.0px;line-height:29.0px;background:#f1f1f1">17</div>
<div class="td" style="left:644.7px;top:323.3px;width:118.1px;height:29.0px;line-height:29.0px;background:#f9f9f9">13.60</div>
<div class="td" style="left:762.8px;top:323.3px;width:115.6px;height:29.0px;line-height:29.0px;background:#f9f9f9">86.40</div>
<div class="td" style="left:200px;top:352.3px;width:78.1px;height:29.0px;line-height:29.0px;background:#ffffff">6</div>
<div class="td" style="left:278.1px;top:352.3px;width:122.2px;height:29.0px;line-height:29.0px;background:#ffffff">燕禹</div>
<div class="td" style="left:400.3px;top:352.3px;width:122.1px;height:29.0px;line-height:29.0px;background:#ffffff">522</div>
<div class="td" style="left:522.4px;top:352.3px;width:122.3px;height:29.0px;line-height:29.0px;background:#fafafa">16</div>
<div class="td" style="left:644.7px;top:352.3px;width:118.1px;height:29.0px;line-height:29.0px;background:#ffffff">3.07</div>
<div class="td" style="left:762.8px;top:352.3px;width:115.6px;height:29.0px;line-height:29.0px;background:#ffffff">96.93</div>
<div class="td" style="left:200px;top:381.3px;width:78.1px;height:29.0px;line-height:29.0px;background:#f9f9f9">7</div>
<div class="td" style="left:278.1px;top:381.3px;width:122.2px;height:29.0px;line-height:29.0px;background:#f9f9f9">赛洋</div>
<div class="td" style="left:400.3px;top:381.3px;width:122.1px;height:29.0px;line-height:29.0px;background:#f9f9f9">164</div>
<div class="td" style="left:522.4px;top:381.3px;width:122.3px;height:29.0px;line-height:29.0px;background:#f1f1f1">14</div>
<div class="td" style="left:644.7px;top:381.3px;width:118.1px;height:29.0px;line-height:29.0px;background:#f9f9f9">8.54</div>
<div class="td" style="left:762.8px;top:381.3px;width:115.6px;height:29.0px;line-height:29.0px;background:#f9f9f9">91.46</div>
<div class="td" style="left:200px;top:410.3px;width:78.1px;height:29.0px;line-height:29.0px;background:#ffffff">8</div>
<div class="td" style="left:278.1px;top:410.3px;width:122.2px;height:29.0px;line-height:29.0px;background:#ffffff">立创</div>
<div class="td" style="left:400.3px;top:410.3px;width:122.1px;height:29.0px;line-height:29.0px;background:#ffffff">55</div>
<div class="td" style="left:522.4px;top:410.3px;width:122.3px;height:29.0px;line-height:29.0px;background:#fafafa">12</div>
<div class="td" style="left:644.7px;top:410.3px;width:118.1px;height:29.0px;line-height:29.0px;background:#ffffff">21.82</div>
<div class="td" style="left:762.8px;top:410.3px;width:115.6px;height:29.0px;line-height:29.0px;background:#ffffff">78.18</div>
<div class="td" style="left:200px;top:439.3px;width:78.1px;height:29.0px;line-height:29.0px;background:#f9f9f9">9</div>
<div class="td" style="left:278.1px;top:439.3px;width:122.2px;height:29.0px;line-height:29.0px;background:#f9f9f9">安徽中梓</div>
<div class="td" style="left:400.3px;top:439.3px;width:122.1px;height:29.0px;line-height:29.0px;background:#f9f9f9">290</div>
<div class="td" style="left:522.4px;top:439.3px;width:122.3px;height:29.0px;line-height:29.0px;background:#f1f1f1">7</div>
<div class="td" style="left:644.7px;top:439.3px;width:118.1px;height:29.0px;line-height:29.0px;background:#f9f9f9">2.41</div>
<div class="td" style="left:762.8px;top:439.3px;width:115.6px;height:29.0px;line-height:29.0px;background:#f9f9f9">97.59</div>
<div class="td" style="left:200px;top:468.3px;width:78.1px;height:29.0px;line-height:29.0px;background:#ffffff">10</div>
<div class="td" style="left:278.1px;top:468.3px;width:122.2px;height:29.0px;line-height:29.0px;background:#ffffff">南自所</div>
<div class="td" style="left:400.3px;top:468.3px;width:122.1px;height:29.0px;line-height:29.0px;background:#ffffff">343</div>
<div class="td" style="left:522.4px;top:468.3px;width:122.3px;height:29.0px;line-height:29.0px;background:#fafafa">5</div>
<div class="td" style="left:644.7px;top:468.3px;width:118.1px;height:29.0px;line-height:29.0px;background:#ffffff">1.46</div>
<div class="td" style="left:762.8px;top:468.3px;width:115.6px;height:29.0px;line-height:29.0px;background:#ffffff">98.54</div>
<div class="td" style="left:200px;top:497.3px;width:78.1px;height:5.0px;line-height:5.0px;background:#f9f9f9"></div>
<div class="td" style="left:278.1px;top:497.3px;width:122.2px;height:5.0px;line-height:5.0px;background:#f9f9f9"></div>
<div class="td" style="left:400.3px;top:497.3px;width:122.1px;height:5.0px;line-height:5.0px;background:#f9f9f9"></div>
<div class="td" style="left:522.4px;top:497.3px;width:122.3px;height:5.0px;line-height:5.0px;background:#f1f1f1"></div>
<div class="td" style="left:644.7px;top:497.3px;width:118.1px;height:5.0px;line-height:5.0px;background:#f9f9f9"></div>
<div class="td" style="left:762.8px;top:497.3px;width:115.6px;height:5.0px;line-height:5.0px;background:#f9f9f9"></div>
<div class="hl" style="top:235.8px"></div>
<div class="hl" style="top:264.8px"></div>
<div class="hl" style="top:293.8px"></div>
<div class="hl" style="top:322.8px"></div>
<div class="hl" style="top:351.8px"></div>
<div class="hl" style="top:380.8px"></div>
<div class="hl" style="top:409.8px"></div>
<div class="hl" style="top:438.8px"></div>
<div class="hl" style="top:467.8px"></div>
<div class="hl" style="top:496.8px"></div>
<div class="vl" style="left:277.6px;top:172px;height:330px"></div>
<div class="vl" style="left:399.8px;top:172px;height:330px"></div>
<div class="vl" style="left:521.9px;top:172px;height:330px"></div>
<div class="vl" style="left:644.2px;top:172px;height:330px"></div>
<div class="vl" style="left:762.3px;top:172px;height:330px"></div>
<div class="abs" style="left:200px;top:501px;width:678.4px;height:9.5px;background:#fafafa"></div>
<div class="abs" style="left:200px;top:502.2px;width:659px;height:7.6px;background:#12b5a9;border-radius:4px"></div>
<div class="abs" style="left:200px;top:510px;width:678.4px;height:1px;background:#ddd"></div>
<div class="abs" style="left:870.5px;top:206.5px;width:7.9px;height:295px;background:#fcfcfc"></div>
<div class="abs" style="left:870.2px;top:205.8px;width:7.6px;height:39px;background:#14b2a8;border-radius:4px"></div>
<div class="abs" style="left:200px;top:521.3px;font-size:11.15px;line-height:14px;color:#333;white-space:nowrap">显示第1至77项结果，共77项</div>
<svg class="abs" style="left:0;top:0" width="1152" height="895" viewBox="0 0 1152 895" fill="none" stroke="#2b80d6" stroke-width="1"><path d="M878.6 153.6 V575.6"/><path d="M878.6 134.4 H223 L199.6 154.4 V575.4 H855 L878.6 555.4"/></svg>
</div>
<!--PANEL-E-->
<!--FOOTER-S-->
<div class="abs" style="left:168px;top:797px;width:223px;height:63.5px;background:#e9edfb;border-radius:2px"></div>
<div class="abs" style="left:179.5px;top:810px;font-size:11.2px;line-height:14px;color:#333;white-space:nowrap">正常<span class="fw" lang="zh-TW">：</span><span style="color:#2d8cf0">1629</span>&nbsp; 故障<span class="fw" lang="zh-TW">：</span><span style="color:#e8344a">19</span>&nbsp; 正常率<span class="fw" lang="zh-TW">：</span><span style="color:#2d8cf0">98.85%</span></div>
<div class="abs" style="left:179.5px;top:834.2px;font-size:11.2px;line-height:14px;color:#f0222e;font-weight:bold;white-space:nowrap">注意<span class="fw" lang="zh-TW">：</span>最近24小时无数据，为故障站点</div>
<div class="abs" style="left:167.5px;top:870.3px;font-size:18.3px;line-height:26px;color:#f00;font-weight:bold;white-space:nowrap">安徽省水文局</div>
<div class="abs" style="left:541.7px;top:721.7px;width:85.3px;height:22.2px;background:rgba(255,255,255,0.72);border:1px solid #9c9c9c;box-shadow:2.5px 2.5px 4px rgba(0,0,0,0.35);font-size:12px;line-height:20.4px;color:#a6a6a6;padding-left:5.6px;white-space:nowrap;word-spacing:2.2px">截图(Alt + A)</div>
<!--FOOTER-E-->
</body>
</html>
